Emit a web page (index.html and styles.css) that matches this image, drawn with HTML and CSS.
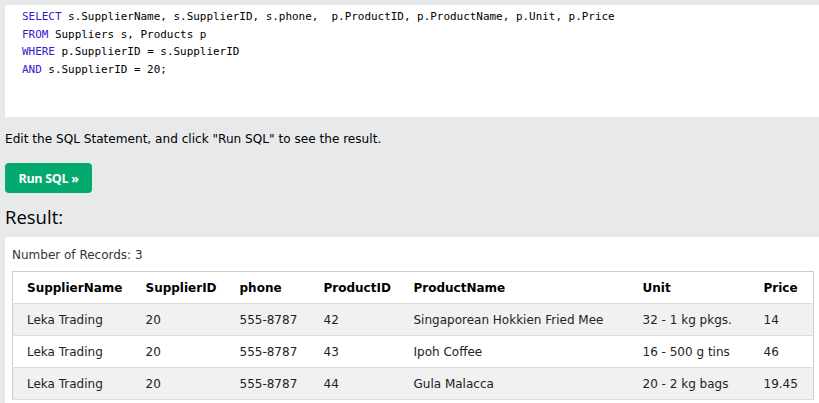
FILE: index.html
```html
<!DOCTYPE html>
<html>
<head>
<meta charset="utf-8">
<link rel="stylesheet" href="styles.css">
</head>
<body>
<div class="page">
  <div class="editor">
    <div class="code-line"><span class="kw">SELECT</span> s.SupplierName, s.SupplierID, s.phone,  p.ProductID, p.ProductName, p.Unit, p.Price</div>
    <div class="code-line"><span class="kw">FROM</span> Suppliers s, Products p</div>
    <div class="code-line"><span class="kw">WHERE</span> p.SupplierID = s.SupplierID</div>
    <div class="code-line"><span class="kw">AND</span> s.SupplierID = 20;</div>
  </div>
  <p class="hint">Edit the SQL Statement, and click "Run SQL" to see the result.</p>
  <button class="run-btn">Run SQL »</button>
  <h2 class="result-title">Result:</h2>
  <div class="result">
    <div class="count">Number of Records: 3</div>
    <table class="data">
      <colgroup>
        <col class="c1"><col class="c2"><col class="c3"><col class="c4"><col class="c5"><col class="c6"><col class="c7">
      </colgroup>
      <tr><th>SupplierName</th><th>SupplierID</th><th>phone</th><th>ProductID</th><th>ProductName</th><th>Unit</th><th>Price</th></tr>
      <tr><td>Leka Trading</td><td>20</td><td>555-8787</td><td>42</td><td>Singaporean Hokkien Fried Mee</td><td>32 - 1 kg pkgs.</td><td>14</td></tr>
      <tr><td>Leka Trading</td><td>20</td><td>555-8787</td><td>43</td><td>Ipoh Coffee</td><td>16 - 500 g tins</td><td>46</td></tr>
      <tr><td>Leka Trading</td><td>20</td><td>555-8787</td><td>44</td><td>Gula Malacca</td><td>20 - 2 kg bags</td><td>19.45</td></tr>
    </table>
  </div>
</div>
</body>
</html>
```

FILE: styles.css
```css
html, body {
  margin: 0;
  padding: 0;
  background: #e7e9eb;
}
body {
  font-family: "DejaVu Sans", Verdana, sans-serif;
  color: #000;
  overflow: hidden;
}
.page {
  padding: 5px 0 0 5px;
}
.editor {
  background: #fff;
  height: 112px;
  box-sizing: border-box;
  padding: 3px 0 0 17px;
  font-family: "DejaVu Sans Mono", monospace;
  font-size: 10.95px;
  line-height: 17.6px;
  color: #000;
}
.code-line {
  white-space: pre;
}
.kw {
  color: #2e1ccb;
}
.hint {
  margin: 14px 0 0 0;
  font-size: 12.1px;
  line-height: 16px;
  color: #000;
}
.run-btn {
  display: block;
  margin-top: 16px;
  width: 87px;
  height: 30px;
  border: none;
  border-radius: 4px;
  background: #04aa6d;
  color: #fff;
  font-family: "Open Sans", sans-serif;
  font-weight: 700;
  font-size: 12.5px;
  letter-spacing: -0.3px;
  padding: 0;
}
.result-title {
  margin: 11px 0 0 0;
  font-family: "Open Sans", sans-serif;
  font-weight: 400;
  font-size: 18.5px;
  line-height: 26px;
}
.result {
  margin-top: 7px;
  background: #fff;
  padding: 9px 6px 10px 7px;
  height: 200px;
}
.count {
  font-size: 12px;
  line-height: 18px;
  color: #333;
  margin-bottom: 7px;
}
.data {
  border-collapse: collapse;
  border: 1px solid #ccc;
  width: 801px;
  table-layout: fixed;
  font-size: 12px;
  color: #222;
}
.data th, .data td {
  text-align: left;
  padding: 0 8px;
  height: 31px;
  border-bottom: 1px solid #ddd;
  white-space: nowrap;
}
.data th {
  font-weight: 700;
  color: #000;
}
.data th:first-child, .data td:first-child {
  padding-left: 14px;
}
.data tr:nth-child(even) td {
  background: #f1f1f1;
}
.c1 { width: 125px; }
.c2 { width: 94px; }
.c3 { width: 84px; }
.c4 { width: 90px; }
.c5 { width: 229px; }
.c6 { width: 121px; }
.c7 { width: 58px; }
```
